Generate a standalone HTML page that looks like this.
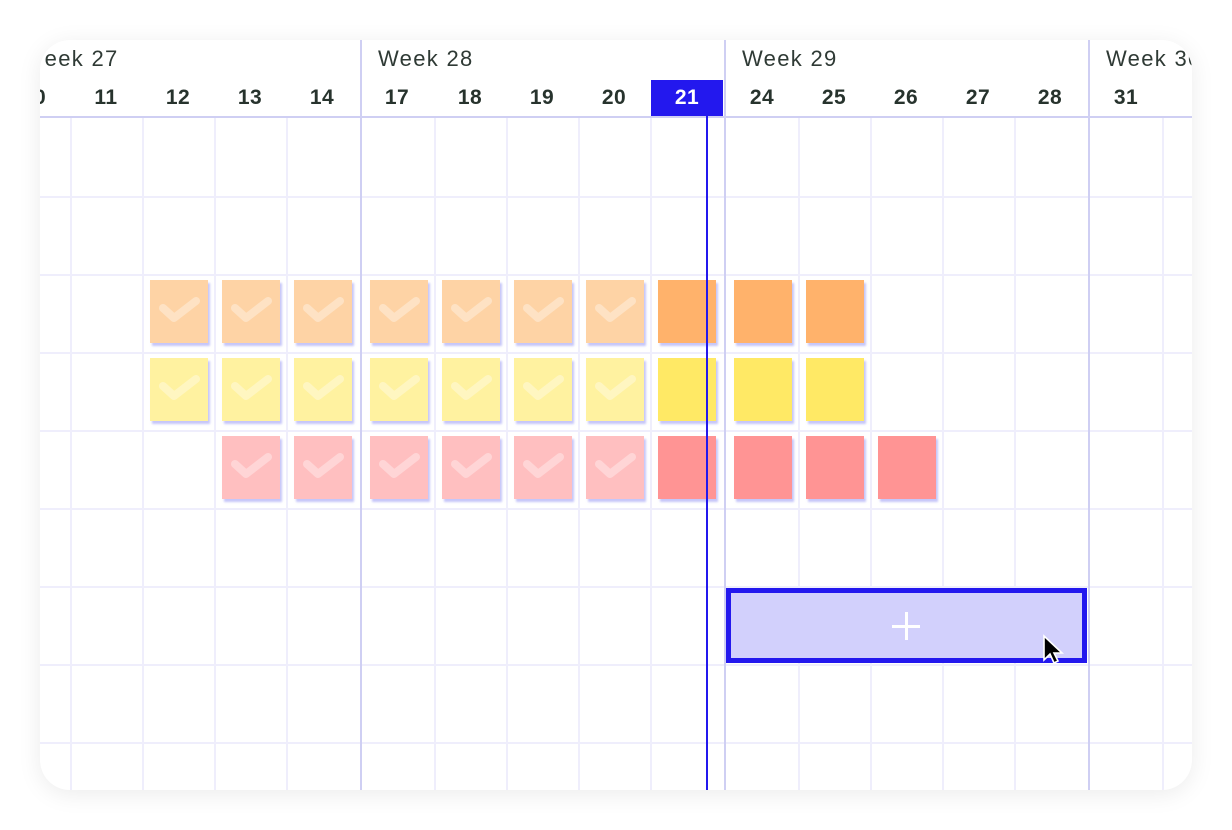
<html><head><style>
body{margin:0;width:1232px;height:830px;background:#fff;font-family:"Liberation Sans",sans-serif;}
#card{position:absolute;left:40px;top:40px;width:1152px;height:750px;border-radius:30px;overflow:hidden;background:#fff;box-shadow:0 4px 24px rgba(0,0,0,0.08);}
.a{position:absolute}
.v{position:absolute;top:117px;bottom:0;width:2px;background:#efeefc}
.vw{position:absolute;top:0;bottom:0;width:2px;background:#cfcff3}
.h{position:absolute;left:0;right:0;height:2px;background:#efeefc}
.wk{position:absolute;top:6px;font-size:22px;color:#2f3a35;letter-spacing:1.3px;white-space:nowrap}
.d{position:absolute;top:46px;width:72px;text-align:center;font-size:21px;color:#27332d;font-weight:bold;margin-left:-36px;letter-spacing:0.5px}
.n{position:absolute;width:58px;height:63px;box-shadow:2px 3px 2px rgba(160,160,245,0.6)}
.n svg{position:absolute;left:7px;top:13px}
</style></head><body>
<div id="card">
<div class="h" style="top:76px;background:#cfcff3"></div>
<div class="h" style="top:156px"></div><div class="h" style="top:234px"></div><div class="h" style="top:312px"></div><div class="h" style="top:390px"></div><div class="h" style="top:468px"></div><div class="h" style="top:546px"></div><div class="h" style="top:624px"></div><div class="h" style="top:702px"></div>
<div class="v" style="left:30px;top:78px"></div><div class="v" style="left:102px;top:78px"></div><div class="v" style="left:174px;top:78px"></div><div class="v" style="left:246px;top:78px"></div>
<div class="v" style="left:394px;top:78px"></div><div class="v" style="left:466px;top:78px"></div><div class="v" style="left:538px;top:78px"></div><div class="v" style="left:610px;top:78px"></div>
<div class="v" style="left:758px;top:78px"></div><div class="v" style="left:830px;top:78px"></div><div class="v" style="left:902px;top:78px"></div><div class="v" style="left:974px;top:78px"></div><div class="v" style="left:1122px;top:78px"></div>
<div class="vw" style="left:320px"></div><div class="vw" style="left:684px"></div><div class="vw" style="left:1048px"></div>
<div class="wk" style="left:-17px">Week 27</div><div class="wk" style="left:338px">Week 28</div><div class="wk" style="left:702px">Week 29</div><div class="wk" style="left:1066px">Week 30</div>
<div class="a" style="left:611px;top:40px;width:72px;height:36px;background:#2318ee"></div>
<div class="d" style="left:-6px">10</div><div class="d" style="left:66px">11</div><div class="d" style="left:138px">12</div><div class="d" style="left:210px">13</div><div class="d" style="left:282px">14</div>
<div class="d" style="left:357px">17</div><div class="d" style="left:430px">18</div><div class="d" style="left:502px">19</div><div class="d" style="left:574px">20</div><div class="d" style="left:647px;color:#fff">21</div>
<div class="d" style="left:722px">24</div><div class="d" style="left:794px">25</div><div class="d" style="left:866px">26</div><div class="d" style="left:938px">27</div><div class="d" style="left:1010px">28</div><div class="d" style="left:1086px">31</div>
<div id="notes"></div>
<div class="a" style="left:686px;top:548px;width:361px;height:75px;box-sizing:border-box;border:5px solid #2318ee;background:#d2d0fc"></div>
<div class="a" style="left:852px;top:585px;width:28px;height:3px;background:#fff"></div>
<div class="a" style="left:865px;top:572px;width:3px;height:28px;background:#fff"></div>
<svg class="a" style="left:1002px;top:594px" width="24" height="32" viewBox="0 0 24 32"><path d="M2 2 L2 26 L8 20 L12 29 L16 27 L12 19 L20 19 Z" fill="#000" stroke="#fff" stroke-width="1.6"/></svg>
<div class="a" style="left:666px;top:76px;width:2px;height:680px;background:#2318ee"></div>
</div>
<script>
var xs={12:110,13:182,14:254,17:330,18:402,19:474,20:546,21:618,24:694,25:766,26:838};
var rows=[[240,["#fed3a5","#ffb26b"],[12,13,14,17,18,19,20],[21,24,25]],[318,["#fff2a0","#ffe965"],[12,13,14,17,18,19,20],[21,24,25]],[396,["#ffbfc0","#ff9494"],[13,14,17,18,19,20],[21,24,25,26]]];
var h="";
rows.forEach(function(r){r[2].forEach(function(d){h+='<div class="n" style="left:'+xs[d]+'px;top:'+r[0]+'px;background:'+r[1][0]+'"><svg width="46" height="34" viewBox="0 0 46 34"><path d="M6 15 L17 25 L39 8" fill="none" stroke="rgba(255,255,255,0.35)" stroke-width="8" stroke-linecap="round" stroke-linejoin="round"/></svg></div>'});r[3].forEach(function(d){h+='<div class="n" style="left:'+xs[d]+'px;top:'+r[0]+'px;background:'+r[1][1]+'"></div>'});});
document.getElementById("notes").innerHTML=h;
</script>
</body></html>
